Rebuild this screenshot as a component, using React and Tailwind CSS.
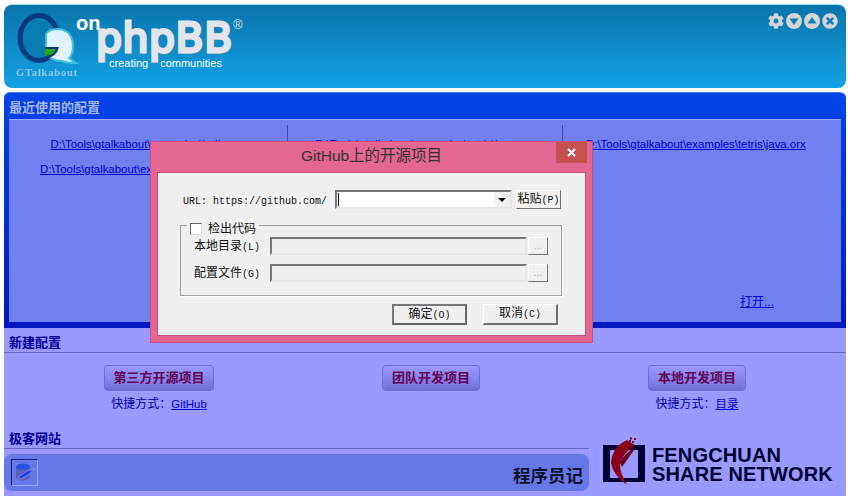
import React from "react";
import { FaCog, FaTimesCircle } from "react-icons/fa";

const sans = "font-['Liberation_Sans','Noto_Sans_CJK_SC',sans-serif]";

const raised = "border border-t-white border-l-white border-r-[#6e6e6e] border-b-[#6e6e6e] bg-[#f0f0f0]";
const sunken = "border-2 border-t-[#777] border-l-[#777] border-r-[#e6e6e6] border-b-[#e6e6e6]";

function RoundArrow({ up }) {
  return (
    <svg width="16" height="16" viewBox="0 0 16 16">
      <circle cx="8" cy="8" r="8" fill="#d4d4d4" />
      <path d={up ? "M8 4 L12.5 10.5 H3.5 Z" : "M3.5 5.5 H12.5 L8 12 Z"} fill="#0a7fb8" />
    </svg>
  );
}

function Logo() {
  return (
    <div className="relative w-[240px] h-[83px]">
      {/* G with speech bubble */}
      <svg className="absolute left-[12px] top-[7px]" width="70" height="60" viewBox="0 0 70 60">
        <ellipse cx="23" cy="26" rx="19" ry="22.5" fill="#0a7cb4" stroke="#063a7e" strokeWidth="5" />
        <path d="M30 22 Q33 17 42 17 Q57 18 57 35 Q57 43 53 46 L60 51 Q51 51 46 49 Q34 49 30 41 Z" fill="#e4f2ff" stroke="#3cc0e0" strokeWidth="2" />
        <path d="M29 35 H43 Q41 45 29 47 Z" fill="#063a7e" />
        <path d="M29 37 H40 Q38 43 29 44 Z" fill="#22a810" />
      </svg>
      <div className="absolute left-[10px] top-[62px] w-[66px] text-center text-[10.5px] font-bold leading-[12px] tracking-[0.8px] text-[#8cc8e8] font-['Liberation_Serif',serif] blur-[0.4px]">
        GTalkabout
      </div>
      <div className="absolute left-[72px] top-[6px] text-[20px] font-bold leading-[24px] text-white font-['Liberation_Sans',sans-serif]">
        on
      </div>
      <div className="absolute left-[92px] top-[13px] text-[41px] leading-[41px] tracking-[0.5px] text-[#e2e6ec] [-webkit-text-stroke:3px_#e2e6ec] [text-shadow:1px_2px_1px_#6d8ea3] font-['DejaVu_Sans',sans-serif]">
        phpBB
      </div>
      <div className="absolute left-[229px] top-[13px] text-[13px] leading-[13px] text-[#dfe6ec] font-['Liberation_Sans',sans-serif]">
        ®
      </div>
      <div className="absolute left-[105px] top-[51px] flex gap-[12px] text-[11px] leading-[14px] text-white font-['Liberation_Sans',sans-serif]">
        <span>creating</span>
        <span>communities</span>
      </div>
    </div>
  );
}

function Header() {
  return (
    <div className="h-[84px] flex justify-between rounded-lg border-t border-[#9fdcf0] bg-gradient-to-b from-[#0a74ac] to-[#12a2e4]">
      <Logo />
      <div className="flex gap-[2px] pt-[8px] pr-[8px] h-[24px]">
        <FaCog size={16} color="#d4d4d4" />
        <RoundArrow />
        <RoundArrow up />
        <FaTimesCircle size={16} color="#d4d4d4" />
      </div>
    </div>
  );
}

function Recent() {
  return (
    <div className="h-[236px] mt-[4px] flex flex-col rounded-t-md border-t border-[#3a80ff] bg-gradient-to-b from-[#0044e8] to-[#0018c0] px-[5px] pb-[6px]">
      <div className="h-[26px] pt-[3px] flex items-center text-[13px] font-bold text-[#a8b4f0]">最近使用的配置</div>
      <div className="flex-1 border-t border-[#a0a8f8] bg-[#7080ee] text-[11.4px] text-[#0000d0] underline">
        <div className="grid grid-cols-[279px_275px_1fr] pt-[5px]">
          <div className="h-[40px] border-r border-[#4a48b0] text-center leading-[38px]">
            D:\Tools\gtalkabout\examples\hello.orx
          </div>
          <div className="h-[40px] border-r border-[#4a48b0] text-center leading-[38px]">
            D:\Tools\gtalkabout\examples\tetris\java.orx
          </div>
          <div className="leading-[38px] pl-[23px]">D:\Tools\gtalkabout\examples\tetris\java.orx</div>
        </div>
        <div className="pl-[31px] leading-[10px] -mt-[1px]">D:\Tools\gtalkabout\examples\tetris\java.orx</div>
        <div className="flex justify-end pr-[67px] pt-[121px] text-[12px] leading-[14px]">打开...</div>
      </div>
    </div>
  );
}

function Shortcut({ label, link }) {
  return (
    <div className="flex flex-col items-center">
      <button className="h-[26px] px-[8.5px] rounded-[4px] border border-[#6c6cd0] bg-gradient-to-b from-[#9a9afc] to-[#7070d8] text-[13px] font-bold text-[#660055]">
        {label}
      </button>
      {link && (
        <div className="mt-[5px] text-[12px] leading-[16px] text-[#0000a8]">
          快捷方式：<span className="text-[11.4px] text-[#0000d8] underline">{link}</span>
        </div>
      )}
    </div>
  );
}

function NewConfig() {
  return (
    <div>
      <div className="h-[25px] flex items-end pl-[5px] border-b border-[#6a66c4] text-[13px] font-bold leading-[18px] text-[#000099]">
        新建配置
      </div>
      <div className="grid grid-cols-[310px_234px_1fr] pt-[12px]">
        <Shortcut label="第三方开源项目" link="GitHub" />
        <Shortcut label="团队开发项目" />
        <Shortcut label="本地开发项目" link="目录" />
      </div>
    </div>
  );
}

function Sites() {
  return (
    <div className="flex justify-between mt-[14px]">
      <div className="w-[585px]">
        <div className="h-[23px] flex items-end pl-[5px] border-b border-[#6a66c4] text-[13px] font-bold leading-[18px] text-[#000099]">
          极客网站
        </div>
        <div className="mt-[5px] h-[37px] flex items-center justify-between pl-[7px] pr-[6px] rounded-lg bg-[#6478e8]">
          <div className="w-[27px] h-[27px] border border-t-[#1a1a80] border-l-[#1a1a80] border-r-[#98a4f4] border-b-[#98a4f4] flex items-center justify-center">
            <svg width="23" height="23" viewBox="0 0 23 23">
              <ellipse cx="10" cy="6" rx="7" ry="3.5" fill="#3050e0" />
              <path d="M3 7 V17 Q10 22 17 17 V7 Q10 11 3 7 Z" fill="#5a60b8" />
              <path d="M5 16 L14 10 L22 8 L15 14 L8 18 Z" fill="#2040f0" stroke="#a0b0ff" strokeWidth="0.6" />
            </svg>
          </div>
          <div className="pt-[5px] text-[17.5px] font-bold text-[#101030] font-['Noto_Sans_CJK_SC',sans-serif]">程序员记</div>
        </div>
      </div>
      <div className="w-[243px] flex items-start gap-[6px] pt-[11px]">
        <svg width="43" height="48" viewBox="0 0 43 48" className="shrink-0">
          <path d="M0 8 H42 V45 H0 Z M7 13 V41 H35 V13 Z" fill="#000033" fillRule="evenodd" />
          <path d="M24 3 Q9 10 8 26 Q10 38 24 48 Q17 36 17 28 Q18 18 32 8 Q28 6 24 3 Z" fill="#8a0018" />
          <path d="M17 26 Q21 16 33 10 Q27 19 19 30 Z" fill="#6a0020" />
          <path d="M26 3 h2 v2 h-2 Z M29 4 h2 v2 h-2 Z M27 0.5 h2 v2 h-2 Z M31 1 h2 v2 h-2 Z" fill="#8a0018" />
        </svg>
        <div className="pt-[9px] text-[20px] font-bold leading-[19px] tracking-[0.15px] text-[#000033] whitespace-nowrap">
          <div>FENGCHUAN</div>
          <div>SHARE NETWORK</div>
        </div>
      </div>
    </div>
  );
}

function FolderRow({ label, hot }) {
  return (
    <div className="flex items-center h-[18px]">
      <div className="w-[89px] pl-[13px] text-[12px] whitespace-nowrap">
        {label}
        <span className="font-['Liberation_Mono',monospace] text-[10px]">({hot})</span>
      </div>
      <div className={`w-[257px] h-[18px] ${sunken}`} />
      <div className={`w-[20px] h-[18px] ml-[1px] ${raised} flex items-center justify-center text-[10px] text-[#aaa] leading-[14px]`}>...</div>
    </div>
  );
}

function Dialog() {
  return (
    <div className="absolute left-[150px] top-[141px] w-[443px] h-[202px] flex flex-col border border-[#c65080] bg-[#e56690] text-[#111]">
      <div className="h-[30px] relative text-center text-[15.5px] leading-[28px] text-[#333]">
        GitHub上的开源项目
        <div className="absolute right-[5px] top-0 w-[31px] h-[21px] bg-[#c75050] flex items-center justify-center">
          <svg width="9" height="9" viewBox="0 0 9 9">
            <path d="M1 1 L8 8 M8 1 L1 8" stroke="#fff" strokeWidth="2" />
          </svg>
        </div>
      </div>
      <div className="mx-[6px] mb-[6px] flex-1 border border-[#c65080] bg-[#f0f0f0] pt-[17px] pl-[25px]">
        <div className="flex items-center h-[19px]">
          <span className="w-[152px] pt-[3px] font-['Liberation_Mono',monospace] text-[10px] whitespace-pre">URL: https://github.com/</span>
          <div className={`w-[177px] h-[19px] ${sunken} bg-white flex justify-between`}>
            <div className="w-px h-[13px] bg-black ml-[1px] mt-[1px]" />
            <div className="w-[16px] h-[15px] bg-[#f0f0f0] flex items-center justify-center">
              <div className="w-0 h-0 border-x-[4px] border-t-[4px] border-x-transparent border-t-black" />
            </div>
          </div>
          <button className={`w-[45px] h-[19px] ml-[4px] ${raised} text-[12px] leading-[16px] whitespace-nowrap`}>
            粘贴<span className="font-['Liberation_Mono',monospace] text-[10px]">(P)</span>
          </button>
        </div>
        <div className="relative w-[382px] h-[71px] mt-[16px] -ml-[3px] border border-[#a0a0a0] shadow-[1px_1px_0_#fff] pt-[11px]">
          <div className="absolute left-[6px] -top-[5px] flex items-center bg-[#f0f0f0] px-[3px] text-[12px] leading-[16px]">
            <span className="w-[12px] h-[12px] bg-white border border-t-[#666] border-l-[#666] border-r-[#ddd] border-b-[#ddd] mr-[6px]" />
            检出代码
          </div>
          <FolderRow label="本地目录" hot="L" />
          <div className="h-[9px]" />
          <FolderRow label="配置文件" hot="G" />
        </div>
        <div className="flex mt-[8px] ml-[209px] gap-[16px]">
          <button className="w-[75px] h-[21px] border-2 border-t-[#777] border-l-[#777] border-r-[#666] border-b-[#666] bg-[#f0f0f0] text-[12px] leading-[16px]">
            确定<span className="font-['Liberation_Mono',monospace] text-[10px]">(O)</span>
          </button>
          <button className={`w-[75px] h-[21px] ${raised} border-b-2 border-r-2 text-[12px] leading-[16px]`}>
            取消<span className="font-['Liberation_Mono',monospace] text-[10px]">(C)</span>
          </button>
        </div>
      </div>
    </div>
  );
}

export default function App() {
  return (
    <div className={`relative w-[850px] h-[500px] overflow-hidden bg-white pt-[4px] px-[4px] ${sans}`}>
      <Header />
      <Recent />
      <div className="h-[168px] bg-[#9999ff]">
        <NewConfig />
        <Sites />
      </div>
      <Dialog />
    </div>
  );
}
